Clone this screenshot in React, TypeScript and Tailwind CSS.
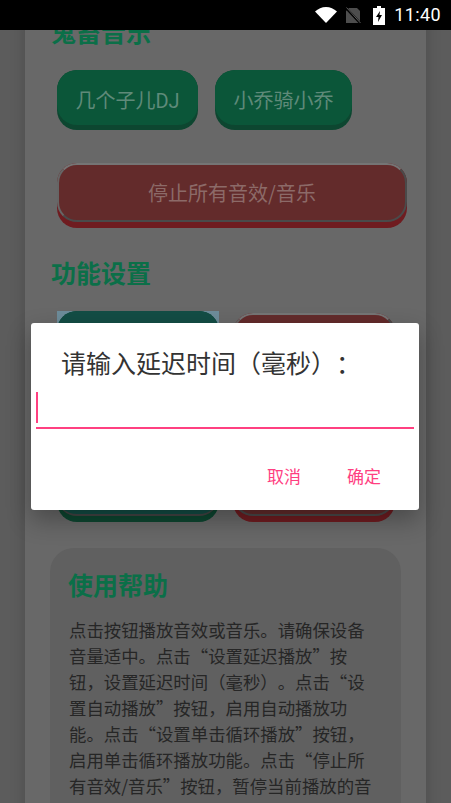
import React from "react";

const cjk = "font-['Noto_Sans_CJK_SC',sans-serif]";
const latin = "font-['Roboto','Noto_Sans_CJK_SC',sans-serif]";
const heading = "h-[34px] text-[25px] font-bold leading-[30px] text-[#0b6f48]";

const GreenButton = ({ label, className }: { label?: string; className: string }) => (
  <button className={`rounded-[20px] bg-[#0d4630] pb-[5px] ${className}`}>
    <span className={`flex h-full items-center justify-center rounded-[20px] bg-[#0b5639] pt-[6px] text-[20px] text-[#5f8a79] ${latin}`}>
      {label}
    </span>
  </button>
);

const RedButton = ({ label, className }: { label?: string; className: string }) => (
  <button className={`rounded-[20px] bg-[#6f1c20] pb-[6px] ${className}`}>
    <span className="flex h-full items-center justify-center rounded-[20px] border-[2px] border-[#4a4a4a] border-l-[#666666] border-t-[#757575] bg-[#632b2b] text-[20px] text-[#8c6a68]">
      {label}
    </span>
  </button>
);

const StatusBar = () => (
  <div className="relative z-20 flex h-[30px] shrink-0 items-center justify-end bg-black pr-[10px]">
    <svg width="22" height="16" viewBox="0 0 22 16" className="mr-[8px]">
      <path d="M0 4.5C3 1.8 6.8 0 11 0s8 1.8 11 4.500L11 16z" fill="#fff" />
    </svg>
    <svg width="16" height="17" viewBox="0 0 16 17" className="mr-[12px]">
      <path d="M4 1h8l3 3v12H1V4z" fill="#4d4d4d" />
      <path d="M1 1l14 15" stroke="#000" strokeWidth="2.500" />
      <path d="M1.500 0.500l14 15.500" stroke="#5a5a5a" strokeWidth="1" />
    </svg>
    <svg width="12" height="19" viewBox="0 0 12 19" className="mr-[9px]">
      <path
        d="M4 0h4v2h4v17H0V2h4zM7 5L3 11h2.500L5 16l4-7H6.500z"
        fill="#fff"
        fillRule="evenodd"
      />
    </svg>
    <span className="font-['Roboto',sans-serif] text-[18px] leading-none tracking-[0.4px] text-white">
      11:40
    </span>
  </div>
);

const Dialog = () => (
  <div className="absolute left-[31px] top-[323px] z-10 flex h-[187px] w-[388px] flex-col rounded-[3px] bg-white px-[5px] shadow-[0_10px_24px_rgba(0,0,0,0.3)]">
    <h2 className="ml-[25px] mt-[23px] text-[25px] leading-[32px] text-[#333333]">
      请输入延迟时间（毫秒）：
    </h2>
    <div className="mt-[14px] h-[37px] border-b-[2px] border-[#ff4081]">
      <div className="h-[31px] w-[2px] bg-[#ff4081]" />
    </div>
    <div className="mt-[35px] flex justify-end gap-[46px] pr-[33px] text-[17px] leading-[24px] text-[#ff4081]">
      <button>取消</button>
      <button>确定</button>
    </div>
  </div>
);

const helpText =
  "点击按钮播放音效或音乐。请确保设备音量适中。点击“设置延迟播放”按钮，设置延迟时间（毫秒）。点击“设置自动播放”按钮，启用自动播放功能。点击“设置单击循环播放”按钮，启用单击循环播放功能。点击“停止所有音效/音乐”按钮，暂停当前播放的音效或音乐。";

export default function App() {
  return (
    <div className={`relative flex h-dvh w-full flex-col overflow-hidden bg-[#5c5c5c] [text-spacing-trim:space-all] ${cjk}`}>
      <StatusBar />
      <div className="flex-1 overflow-hidden">
        <div className="mx-[25px] -mt-[14px] bg-[#686868] pb-[40px] pl-[25px] pr-[19px] shadow-[0_0_14px_rgba(0,0,0,0.18)]">
          <h2 className={`ml-[1px] ${heading}`}>鬼畜音乐</h2>
          <div className="ml-[7px] mt-[20px] flex gap-[17px]">
            <GreenButton label="几个子儿DJ" className="h-[60px] w-[141px]" />
            <GreenButton label="小乔骑小乔" className="h-[60px] w-[137px]" />
          </div>
          <RedButton label="停止所有音效/音乐" className="ml-[7px] mt-[33px] h-[65px] w-[350px]" />
          <h2 className={`ml-[1px] mt-[29px] ${heading}`}>功能设置</h2>
          <div className="ml-[7px] mt-[20px] flex gap-[14px]">
            <div className="h-[211px] w-[162px] bg-[linear-gradient(#6d8c9a_20px,transparent_20px)]">
              <button className="block h-full w-full rounded-[20px] bg-[#0d4630] pb-[6px]">
                <span className="block h-full rounded-[20px] border-b-[2px] border-[#444444] bg-[#134d45]" />
              </button>
            </div>
            <RedButton className="mt-[2px] h-[209px] w-[162px]" />
          </div>
          <div className="mt-[26px] h-[400px] w-[351px] rounded-[24px] bg-[#606060] px-[18px] pt-[21px]">
            <h2 className={heading}>使用帮助</h2>
            <p className="ml-[1px] mt-[14px] w-[311px] text-[17.4px] leading-[26px] text-[#262626]">{helpText}</p>
          </div>
        </div>
      </div>
      <Dialog />
    </div>
  );
}
